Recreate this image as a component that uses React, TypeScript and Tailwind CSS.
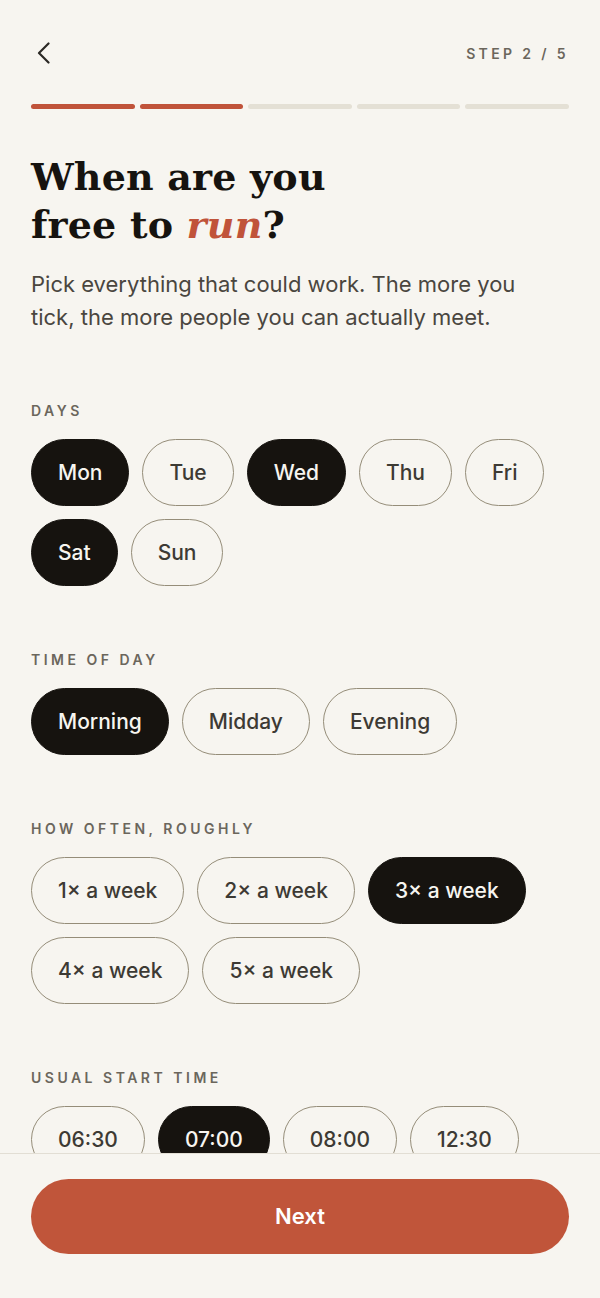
import { useState } from "react";

const days = ["Mon", "Tue", "Wed", "Thu", "Fri", "Sat", "Sun"];
const times = ["Morning", "Midday", "Evening"];
const freqs = ["1× a week", "2× a week", "3× a week", "4× a week", "5× a week"];
const starts = ["06:30", "07:00", "08:00", "12:30"];

function Chip({
  label,
  active,
  onClick,
}: {
  label: string;
  active: boolean;
  onClick: () => void;
}) {
  return (
    <button
      onClick={onClick}
      className={`h-[67px] px-[26px] rounded-full text-[21px] font-medium leading-none border-[1.5px] ${
        active
          ? "bg-[#16130f] border-[#16130f] text-[#f7f5f0]"
          : "bg-transparent border-[#958d79] text-[#3d3a34]"
      }`}
    >
      {label}
    </button>
  );
}

function Section({
  title,
  items,
  selected,
  onToggle,
}: {
  title: string;
  items: string[];
  selected: string[];
  onToggle: (v: string) => void;
}) {
  return (
    <div className="mt-[66px] first:mt-[69px]">
      <div className="h-4 text-[14px] leading-4 font-semibold tracking-[0.25em] text-[#6b665c]">
        {title}
      </div>
      <div className="mt-[20px] flex flex-wrap gap-[13px]">
        {items.map((it) => (
          <Chip
            key={it}
            label={it}
            active={selected.includes(it)}
            onClick={() => onToggle(it)}
          />
        ))}
      </div>
    </div>
  );
}

export default function App() {
  const [selDays, setSelDays] = useState<string[]>(["Mon", "Wed", "Sat"]);
  const [selTimes, setSelTimes] = useState<string[]>(["Morning"]);
  const [freq, setFreq] = useState("3× a week");
  const [start, setStart] = useState("07:00");

  const toggle = (list: string[], set: (v: string[]) => void) => (v: string) =>
    set(list.includes(v) ? list.filter((x) => x !== v) : [...list, v]);

  return (
    <div className="h-[1298px] w-full bg-[#f7f5f0] flex flex-col font-['Inter',sans-serif]">
      <div className="flex-1 overflow-hidden px-[31px]">
        {/* header */}
        <div className="pt-[31px] h-[75px] flex items-center justify-between">
          <button className="ml-[5px] text-[#2b2925]">
            <svg width="16" height="22" viewBox="0 0 16 22" fill="none">
              <polyline
                points="12.5,1.5 3,11 12.5,20.5"
                stroke="currentColor"
                strokeWidth="2.2"
                strokeLinecap="round"
                strokeLinejoin="round"
              />
            </svg>
          </button>
          <span className="text-[14px] font-semibold tracking-[0.24em] text-[#6b665c]">
            STEP 2 / 5
          </span>
        </div>

        {/* progress */}
        <div className="mt-[29px] flex gap-[5px]">
          {[0, 1, 2, 3, 4].map((i) => (
            <div
              key={i}
              className={`h-[5px] flex-1 rounded-full ${
                i < 2 ? "bg-[#c0533a]" : "bg-[#e4e0d5]"
              }`}
            />
          ))}
        </div>

        <h1 className="mt-[44px] font-['DejaVu_Serif',serif] font-bold text-[38px] leading-[48px] tracking-[0.005em] text-[#16130f]">
          When are you
          <br />
          free to <em className="text-[#c0533a]">run</em>?
        </h1>

        <p className="mt-[19px] max-w-[500px] text-[22px] leading-[33px] text-[#4a463f]">
          Pick everything that could work. The more you tick, the more people
          you can actually meet.
        </p>

        <div>
          <Section
            title="DAYS"
            items={days}
            selected={selDays}
            onToggle={toggle(selDays, setSelDays)}
          />
          <Section
            title="TIME OF DAY"
            items={times}
            selected={selTimes}
            onToggle={toggle(selTimes, setSelTimes)}
          />
          <Section
            title="HOW OFTEN, ROUGHLY"
            items={freqs}
            selected={[freq]}
            onToggle={setFreq}
          />
          <Section
            title="USUAL START TIME"
            items={starts}
            selected={[start]}
            onToggle={setStart}
          />
        </div>
      </div>

      {/* footer */}
      <div className="border-t border-[#e2ded4] px-[31px] pt-[25px] pb-[44px]">
        <button className="w-full h-[75px] rounded-full bg-[#c0553a] text-white text-[22px] font-semibold">
          Next
        </button>
      </div>
    </div>
  );
}
